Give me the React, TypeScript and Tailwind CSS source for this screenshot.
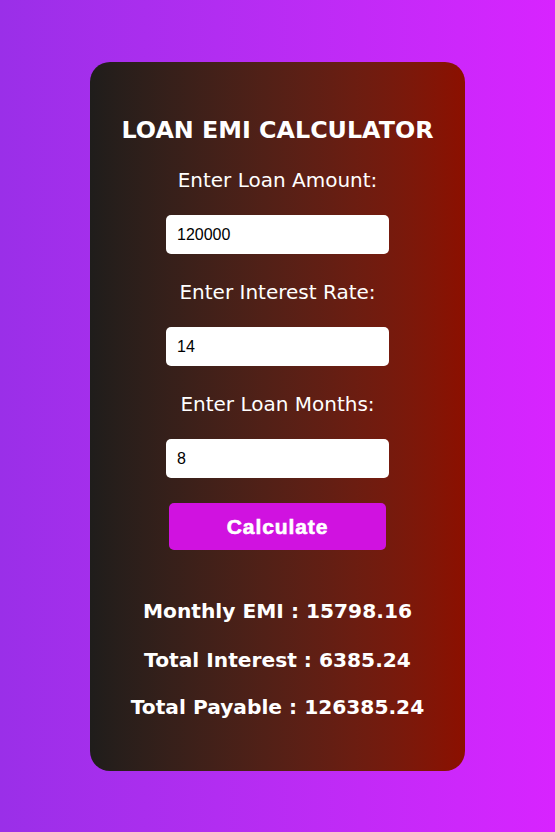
import { useState } from "react";

export default function App() {
  const [amount, setAmount] = useState("120000");
  const [rate, setRate] = useState("14");
  const [months, setMonths] = useState("8");
  const [result, setResult] = useState({ emi: "15798.16", interest: "6385.24", total: "126385.24" });

  const calculate = () => {
    const p = parseFloat(amount);
    const r = parseFloat(rate) / 12 / 100;
    const n = parseFloat(months);
    if (!p || !r || !n) return;
    const emi = (p * r * Math.pow(1 + r, n)) / (Math.pow(1 + r, n) - 1);
    const total = emi * n;
    setResult({ emi: emi.toFixed(2), interest: (total - p).toFixed(2), total: total.toFixed(2) });
  };

  return (
    <div className="min-h-[832px] w-full bg-gradient-to-r from-[#9a2fe8] to-[#d823ff] flex flex-col items-center pt-[62px] pb-[61px] font-['DejaVu_Sans',Verdana,sans-serif]">
      {/* card */}
      <div className="w-[375px] rounded-[20px] bg-gradient-to-r from-[#1f1d1b] to-[#8c0f00] flex flex-col items-center pt-[54px] pb-[52px] text-white">
        <h1 className="h-[28px] leading-[28px] text-[23.8px] font-bold">LOAN EMI CALCULATOR</h1>

        <label className="mt-[24px] h-[24px] leading-[24px] text-[20px]">Enter Loan Amount:</label>
        <input
          value={amount}
          onChange={(e) => setAmount(e.target.value)}
          className="mt-[23px] w-[223px] h-[39px] rounded-[5px] bg-white text-black pl-[11px] pr-[10px] text-[16px] font-['Liberation_Sans',Arial,sans-serif] outline-none"
        />

        <label className="mt-[26px] h-[24px] leading-[24px] text-[20px]">Enter Interest Rate:</label>
        <input
          value={rate}
          onChange={(e) => setRate(e.target.value)}
          className="mt-[23px] w-[223px] h-[39px] rounded-[5px] bg-white text-black pl-[11px] pr-[10px] text-[16px] font-['Liberation_Sans',Arial,sans-serif] outline-none"
        />

        <label className="mt-[26px] h-[24px] leading-[24px] text-[20px]">Enter Loan Months:</label>
        <input
          value={months}
          onChange={(e) => setMonths(e.target.value)}
          className="mt-[23px] w-[223px] h-[39px] rounded-[5px] bg-white text-black pl-[11px] pr-[10px] text-[16px] font-['Liberation_Sans',Arial,sans-serif] outline-none"
        />

        <button
          onClick={calculate}
          className="mt-[25px] w-[217px] h-[47px] rounded-[5px] bg-[#d012e0] text-white text-[21px] font-bold tracking-[0.9px] [-webkit-text-stroke:0.6px_white] font-['Liberation_Sans',Arial,sans-serif]"
        >
          Calculate
        </button>

        <p className="mt-[49px] h-[24px] leading-[24px] text-[20.2px] font-bold">Monthly EMI : {result.emi}</p>
        <p className="mt-[25px] h-[24px] leading-[24px] text-[20.2px] font-bold">Total Interest : {result.interest}</p>
        <p className="mt-[23px] h-[24px] leading-[24px] text-[20.2px] font-bold">Total Payable : {result.total}</p>
      </div>
    </div>
  );
}
